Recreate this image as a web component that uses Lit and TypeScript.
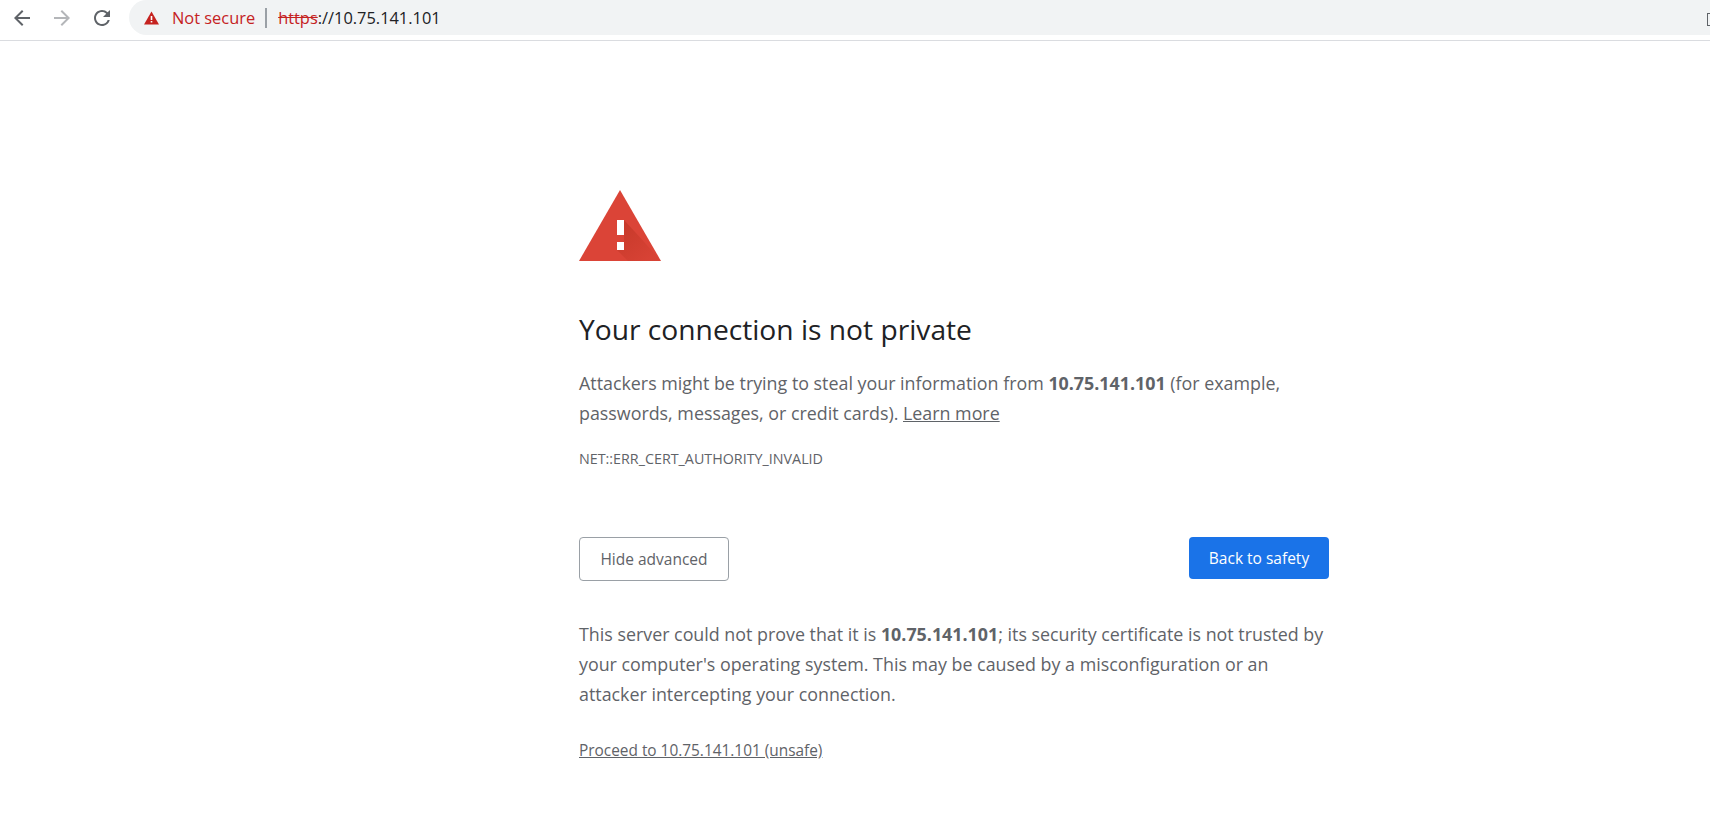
import { LitElement, html, css } from 'lit';
import { customElement } from 'lit/decorators.js';

@customElement('browser-toolbar')
export class BrowserToolbar extends LitElement {
  static styles = css`
    :host {
      display: flex;
      align-items: flex-start;
      height: 41px;
      box-sizing: border-box;
      padding-bottom: 2px;
      border-bottom: 1px solid #dadce0;
      background: #fff;
      font-family: 'Open Sans', 'Noto Sans', sans-serif;
    }
    .nav {
      display: flex;
      align-items: center;
      gap: 16px;
      padding: 6px 0 0 10px;
      width: 129px;
      box-sizing: border-box;
      flex: none;
    }
    .nav svg {
      width: 24px;
      height: 24px;
      display: block;
    }
    .omnibox {
      flex: 1;
      height: 35px;
      display: flex;
      align-items: center;
      background: #f1f3f4;
      border-radius: 17.5px 0 0 17.5px;
      padding-left: 15px;
      position: relative;
      font-size: 16.4px;
    }
    .warn {
      width: 15px;
      height: 14px;
      display: block;
      margin-right: 13px;
      flex: none;
    }
    .status {
      color: #c5221f;
    }
    .sep {
      width: 2px;
      height: 20px;
      background: #9aa0a6;
      margin: 0 11px 0 10px;
    }
    .scheme {
      color: #c5221f;
      text-decoration: line-through;
    }
    .rest {
      color: #202124;
    }
    .edge {
      position: absolute;
      right: 0;
      top: 13px;
      width: 3px;
      height: 13px;
      border: 1px solid #5f6368;
      border-right: none;
      box-sizing: border-box;
    }
  `;

  render() {
    return html`
      <div class="nav">
        <svg viewBox="0 0 24 24" fill="#5f6368"><path d="M20 11H7.83l5.59-5.59L12 4l-8 8 8 8 1.41-1.41L7.83 13H20v-2z"/></svg>
        <svg viewBox="0 0 24 24" fill="#b4b6b9"><path d="M12 4l-1.41 1.41L16.17 11H4v2h12.17l-5.58 5.59L12 20l8-8z"/></svg>
        <svg viewBox="0 0 24 24" fill="#5f6368"><path d="M17.65 6.35A7.958 7.958 0 0 0 12 4c-4.42 0-7.99 3.58-7.99 8s3.57 8 7.99 8c3.73 0 6.84-2.55 7.73-6h-2.08A5.99 5.99 0 0 1 12 18c-3.31 0-6-2.69-6-6s2.69-6 6-6c1.66 0 3.14.69 4.22 1.78L13 11h7V4l-2.35 2.35z"/></svg>
      </div>
      <div class="omnibox">
        <svg class="warn" viewBox="0 0 15 14"><path fill="#c5221f" d="M7.5 .5 15 13.5H0z"/><path fill="#fff" d="M6.7 5h1.6v4H6.7zM6.7 10h1.6v1.6H6.7z"/></svg>
        <span class="status">Not secure</span>
        <span class="sep"></span>
        <span class="scheme">https</span><span class="rest">://10.75.141.101</span>
        <span class="edge"></span>
      </div>
    `;
  }
}

@customElement('app-root')
export class AppRoot extends LitElement {
  static styles = css`
    :host {
      display: block;
      min-height: 825px;
      background: #fff;
      font-family: 'Open Sans', 'Noto Sans', sans-serif;
      color: #5f6368;
    }
    .page {
      width: 750px;
      margin-left: 579px;
      padding-top: 149px;
    }
    .icon {
      display: block;
      width: 82px;
      height: 71px;
    }
    h1 {
      margin: 50px 0 0;
      font-size: 28.2px;
      line-height: 36px;
      font-weight: 400;
      color: #202124;
    }
    p {
      margin: 0;
      font-size: 17.85px;
      line-height: 30px;
    }
    .intro {
      margin-top: 21px;
    }
    b {
      font-weight: 700;
    }
    a {
      color: #5f6368;
      text-decoration: underline;
    }
    .code {
      margin-top: 21px;
      font-size: 14.3px;
      line-height: 20px;
    }
    .actions {
      display: flex;
      justify-content: space-between;
      align-items: flex-start;
      margin-top: 68px;
    }
    button {
      font-family: inherit;
      font-size: 15.5px;
      font-weight: 400;
      border-radius: 4px;
      box-sizing: border-box;
    }
    .advanced {
      width: 150px;
      height: 44px;
      background: #fff;
      color: #5f6368;
      border: 1px solid #9aa0a6;
    }
    .safety {
      width: 140px;
      height: 42px;
      background: #1a73e8;
      color: #fff;
      border: none;
    }
    .detail {
      margin-top: 38px;
    }
    .proceed {
      display: block;
      margin-top: 32px;
      font-size: 15.4px;
      line-height: 20px;
    }
  `;

  render() {
    return html`
      <browser-toolbar></browser-toolbar>
      <main class="page">
        <svg class="icon" viewBox="0 0 82 71">
          <defs>
            <linearGradient id="shade" gradientUnits="userSpaceOnUse" x1="45" y1="35" x2="72" y2="68">
              <stop offset="0" stop-color="#a52714" stop-opacity=".35"/>
              <stop offset="1" stop-color="#a52714" stop-opacity=".06"/>
            </linearGradient>
          </defs>
          <path fill="#db4437" d="M41 0 82 71H0z"/>
          <path fill="url(#shade)" d="M45 30 62.5 49 82 71H49L38 60 45 51z"/>
          <path fill="#fff" d="M38 30h7v15h-7zM38 52h7v8h-7z"/>
        </svg>
        <h1>Your connection is not private</h1>
        <p class="intro">Attackers might be trying to steal your information from <b>10.75.141.101</b> (for example, passwords, messages, or credit cards). <a href="#">Learn more</a></p>
        <div class="code">NET::ERR_CERT_AUTHORITY_INVALID</div>
        <div class="actions">
          <button class="advanced">Hide advanced</button>
          <button class="safety">Back to safety</button>
        </div>
        <p class="detail">This server could not prove that it is <b>10.75.141.101</b>; its security certificate is not trusted by your computer's operating system. This may be caused by a misconfiguration or an attacker intercepting your connection.</p>
        <a class="proceed" href="#">Proceed to 10.75.141.101 (unsafe)</a>
      </main>
    `;
  }
}
